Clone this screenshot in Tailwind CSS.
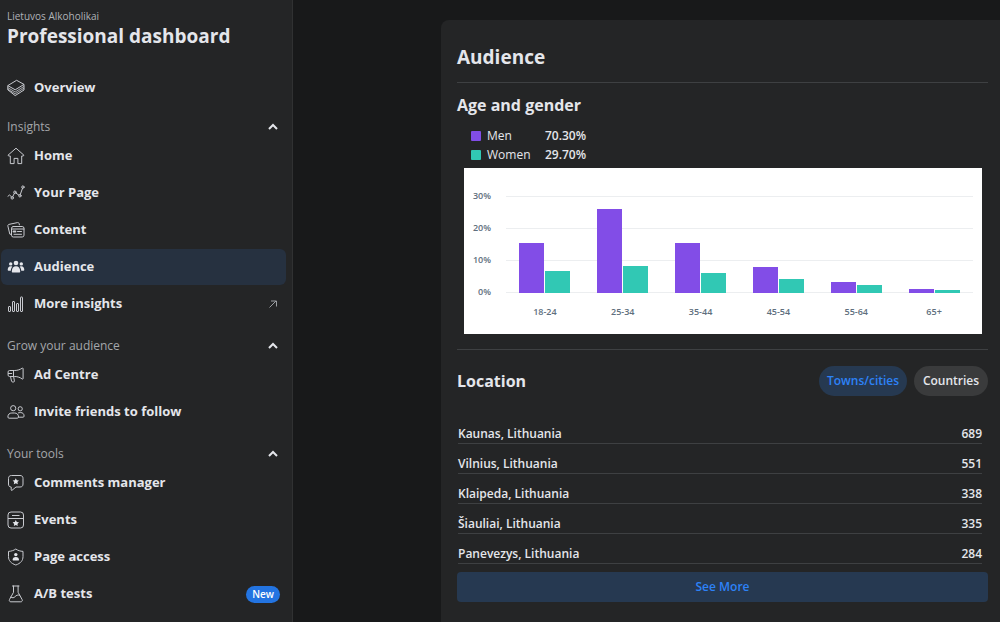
<!DOCTYPE html>
<html lang="en">
<head>
    <meta charset="UTF-8">
    <meta name="viewport" content="width=device-width, initial-scale=1.0">
    <title>Professional dashboard</title>
    <script src="https://cdn.jsdelivr.net/npm/@tailwindcss/browser@4"></script>
</head>
<body class="bg-[#18191a] text-[#e4e6eb] font-['Segoe_UI','Open_Sans',sans-serif] flex min-h-screen">

    <!-- Sidebar -->
    <aside class="w-[293px] shrink-0 bg-[#242526] border-r border-[#303132]">
        <header class="px-[7px] pt-2">
            <p class="text-[10px] leading-4 text-[#b0b3b8]">Lietuvos Alkoholikai</p>
            <h1 class="text-[19px] leading-6 font-bold">Professional dashboard</h1>
        </header>

        <nav class="mt-[22px] pl-px pr-[6px] text-[13px] font-bold">
            <a href="#" class="flex items-center gap-[9px] h-9 px-[6px] rounded-md">
                <svg class="size-[18px] text-[#c8cacf]" viewBox="0 0 18 18" fill="none" stroke="currentColor" stroke-width="1" stroke-linejoin="round">
                    <path d="M9.6 1.3 17 5.4 8.2 10.8.8 6.6z"/>
                    <path d="M.8 6.6v4.2l7.4 5.8 8.8-5.6V5.4"/>
                    <path d="M.8 8.6l7.4 4.4L17 7.4M.8 10.2l7.4 4.6L17 9.2" stroke-width=".8"/>
                </svg>
                Overview
            </a>

            <button type="button" class="mt-[10px] flex w-full items-center justify-between h-[22px] pl-[6px] pr-2 text-xs font-medium text-[#a4a7ab]">
                Insights
                <svg class="size-[10px] text-[#e4e6eb]" viewBox="0 0 10 10" fill="none" stroke="currentColor" stroke-width="2"><path d="M1 7l4-4 4 4"/></svg>
            </button>
            <ul class="flex flex-col gap-px">
                <li>
                    <a href="#" class="flex items-center gap-[9px] h-9 px-[6px] rounded-md">
                        <svg class="size-[18px] text-[#c8cacf]" viewBox="0 0 18 18" fill="none" stroke="currentColor" stroke-width="1" stroke-linejoin="round">
                            <path d="M9 1.2 16.9 8.2l-.6.8h-1.6v7.6h-3.8v-5.2H7.1v5.2H3.3V9H1.6L1 8.200z"/>
                        </svg>
                        Home
                    </a>
                </li>
                <li>
                    <a href="#" class="flex items-center gap-[9px] h-9 px-[6px] rounded-md">
                        <svg class="size-[18px] text-[#c8cacf]" viewBox="0 0 18 18" fill="none" stroke="currentColor" stroke-width="1" stroke-linecap="round">
                            <path d="M1 12.200l1.600-1.200 2 2M5.700 12.800l1.700-3.600M8.800 9l3.200 2.200M13.200 10.700l2.400-6.600"/>
                            <circle cx="5.200" cy="13.900" r="1.200"/><circle cx="7.900" cy="8.200" r="1.200"/><circle cx="12.900" cy="11.800" r="1.200"/><circle cx="15.900" cy="3.100" r="1.200"/>
                        </svg>
                        Your Page
                    </a>
                </li>
                <li>
                    <a href="#" class="flex items-center gap-[9px] h-9 px-[6px] rounded-md">
                        <svg class="size-[18px] text-[#c8cacf]" viewBox="0 0 18 18" fill="none" stroke="currentColor" stroke-width="1" stroke-linejoin="round" stroke-linecap="round">
                            <rect x="4.500" y="5.500" width="12.500" height="10.500" rx="1.800"/>
                            <path d="M4.500 13.500l-1.700-.4-1.900-8c-.2-.9.200-1.500 1-1.700l8.600-1.800c.9-.2 1.400.2 1.600 1l.3 1.200"/>
                            <path d="M4.500 8h12.500M10.500 10.500h4M7 13.300h7.500"/>
                            <path d="M6.500 10.500h2" stroke-width="1.800"/>
                        </svg>
                        Content
                    </a>
                </li>
                <li>
                    <a href="#" aria-current="page" class="flex items-center gap-[9px] h-9 px-[6px] rounded-md bg-[#263140]">
                        <svg class="size-[18px]" viewBox="0 0 18 18" fill="currentColor">
                            <circle cx="9" cy="5" r="2.300"/><circle cx="3.700" cy="5.900" r="1.700"/><circle cx="14.300" cy="5.900" r="1.700"/>
                            <path d="M4.800 13.500c0-3.400 1.700-5.300 4.200-5.300s4.200 1.900 4.200 5.300c0 .6-.4 1-1 1H5.800c-.6 0-1-.4-1-1z"/>
                            <path d="M5.300 8.700c-.5-.4-1-.5-1.700-.5C1.800 8.200.7 9.700.7 11.800c0 .6.300.9.800.9h2.300c.1-1.700.6-3 1.500-4zM12.700 8.700c.5-.4 1-.5 1.700-.5 1.800 0 2.900 1.500 2.900 3.600 0 .6-.3.9-.8.9h-2.300c-.1-1.700-.6-3-1.500-4z"/>
                        </svg>
                        Audience
                    </a>
                </li>
                <li>
                    <a href="#" class="flex items-center gap-[9px] h-9 pl-[6px] pr-2 rounded-md">
                        <svg class="size-[18px] text-[#c8cacf]" viewBox="0 0 18 18" fill="none" stroke="currentColor" stroke-width="1">
                            <rect x="1.500" y="11.500" width="2" height="5" rx=".5"/><rect x="5.500" y="6.500" width="2" height="10" rx=".5"/><rect x="9.500" y="8.500" width="2" height="8" rx=".5"/><rect x="13.500" y="2" width="2" height="14.500" rx=".5"/>
                        </svg>
                        More insights
                        <svg class="size-[10px] ml-auto text-[#9a9da1]" viewBox="0 0 10 10" fill="none" stroke="currentColor" stroke-width="1"><path d="M1.500 8.500l6.500-6.500M3 2h5.500v5.500"/></svg>
                    </a>
                </li>
            </ul>

            <button type="button" class="mt-[13px] flex w-full items-center justify-between h-[22px] pl-[6px] pr-2 text-xs font-medium text-[#a4a7ab]">
                Grow your audience
                <svg class="size-[10px] text-[#e4e6eb]" viewBox="0 0 10 10" fill="none" stroke="currentColor" stroke-width="2"><path d="M1 7l4-4 4 4"/></svg>
            </button>
            <ul class="flex flex-col gap-px">
                <li>
                    <a href="#" class="flex items-center gap-[9px] h-9 px-[6px] rounded-md">
                        <svg class="size-[18px] text-[#c8cacf]" viewBox="0 0 18 18" fill="none" stroke="currentColor" stroke-width="1" stroke-linejoin="round">
                            <path d="M2.500 4.500h5.200c3 0 5.500-1 7.500-2.300.5-.3.900-.1.900.4v10c0 .5-.4.700-.9.400-2-1.500-4.500-2.500-7.500-2.500H2.500c-.9 0-1.400-.6-1.400-1.400V5.900c0-.8.500-1.400 1.400-1.400z"/>
                            <path d="M1.100 7.500h4M6.500 4.500v6M3.500 10.500l1 4.500c.2.700.6 1 1.200 1h.8c.7 0 1-.5.9-1.100l-.8-4.400"/>
                        </svg>
                        Ad Centre
                    </a>
                </li>
                <li>
                    <a href="#" class="flex items-center gap-[9px] h-9 px-[6px] rounded-md">
                        <svg class="size-[18px] text-[#c8cacf]" viewBox="0 0 18 18" fill="none" stroke="currentColor" stroke-width="1" stroke-linejoin="round">
                            <circle cx="6.200" cy="5.200" r="2.600"/><circle cx="13.200" cy="5.800" r="2.100"/>
                            <path d="M.9 14c0-2.700 1.700-4 3.900-4h2.800c2.200 0 3.900 1.300 3.900 4 0 .8-.5 1.200-1.200 1.200H2.100c-.7 0-1.200-.4-1.200-1.200z"/>
                            <path d="M11 10c.6-.3 1.200-.4 1.900-.4h.8c2 0 3.400 1.200 3.400 3.500 0 .7-.4 1.100-1.100 1.100h-4.500"/>
                        </svg>
                        Invite friends to follow
                    </a>
                </li>
            </ul>

            <button type="button" class="mt-[13px] flex w-full items-center justify-between h-[22px] pl-[6px] pr-2 text-xs font-medium text-[#a4a7ab]">
                Your tools
                <svg class="size-[10px] text-[#e4e6eb]" viewBox="0 0 10 10" fill="none" stroke="currentColor" stroke-width="2"><path d="M1 7l4-4 4 4"/></svg>
            </button>
            <ul class="flex flex-col gap-px">
                <li>
                    <a href="#" class="flex items-center gap-[9px] h-9 px-[6px] rounded-md">
                        <svg class="size-[18px] text-[#c8cacf]" viewBox="0 0 18 18" fill="none" stroke="currentColor" stroke-width="1" stroke-linejoin="round">
                            <path d="M4.500 1.500h8.500c2 0 3 1 3 3v5.500c0 2-1 3-3 3H9l-4 3.300c-.4.300-.8.100-.8-.4V13c-1.800 0-2.700-1-2.700-3V4.500c0-2 1-3 3-3z"/>
                            <path fill="#e4e6eb" stroke="none" d="M8.800 4.200l1 2 2.200.3-1.600 1.600.4 2.200-2-1-2 1 .4-2.200-1.600-1.600 2.200-.3z"/>
                        </svg>
                        Comments manager
                    </a>
                </li>
                <li>
                    <a href="#" class="flex items-center gap-[9px] h-9 px-[6px] rounded-md">
                        <svg class="size-[18px] text-[#c8cacf]" viewBox="0 0 18 18" fill="none" stroke="currentColor" stroke-width="1">
                            <rect x="1" y="1" width="15.500" height="16" rx="3"/>
                            <path d="M1 7.500h15.500M5 4.500h7.500"/>
                            <path fill="#e4e6eb" stroke="none" d="M8.800 9l1 2 2.200.3-1.600 1.600.4 2.200-2-1-2 1 .4-2.200-1.600-1.600 2.200-.3z"/>
                        </svg>
                        Events
                    </a>
                </li>
                <li>
                    <a href="#" class="flex items-center gap-[9px] h-9 px-[6px] rounded-md">
                        <svg class="size-[18px] text-[#c8cacf]" viewBox="0 0 18 18" fill="none" stroke="currentColor" stroke-width="1" stroke-linejoin="round">
                            <path d="M8.800 1c2.200 1.600 4.500 2.200 7.200 2.400v5.200c0 4-2.400 6.800-7.200 8.400-4.800-1.600-7.300-4.400-7.300-8.400V3.400C4.200 3.200 6.600 2.600 8.800 1z"/>
                            <circle cx="8.800" cy="6.600" r="1.700" fill="#e4e6eb" stroke="none"/>
                            <path d="M5.600 12c0-1.900 1.100-3 3.200-3s3.200 1.100 3.200 3c0 .3-.2.500-.5.500H6.100c-.3 0-.5-.2-.5-.5z" fill="#e4e6eb" stroke="none"/>
                        </svg>
                        Page access
                    </a>
                </li>
                <li>
                    <a href="#" class="flex items-center gap-[9px] h-9 px-[6px] rounded-md">
                        <svg class="size-[18px] text-[#c8cacf]" viewBox="0 0 18 18" fill="none" stroke="currentColor" stroke-width="1" stroke-linejoin="round" stroke-linecap="round">
                            <path d="M5.500 1h6.500M6.500 1v6.300l-4 7.200c-.6 1.200 0 2.300 1.300 2.300h10c1.300 0 1.900-1.100 1.300-2.300l-4-7.200V1"/>
                            <path d="M3.800 12.200c1.800.9 3 .8 4.300-.6s2.600-1.900 4.600-1.400"/>
                        </svg>
                        A/B tests
                        <span class="ml-auto flex h-[17px] items-center rounded-full bg-[#2374e1] px-[6px] text-[10px] font-semibold text-white">New</span>
                    </a>
                </li>
            </ul>
        </nav>
    </aside>

    <!-- Audience card -->
    <main class="flex flex-1 min-w-0 pt-5 pl-[148px]">
        <section class="flex-1 min-w-0 rounded-tl-lg bg-[#242526] pl-4 pr-3">
            <h2 class="mt-[23px] text-[19px] leading-7 font-bold">Audience</h2>
            <hr class="mt-[11px] border-[#3e4042]">

            <h3 class="mt-[10px] text-base leading-6 font-bold">Age and gender</h3>
            <table class="mt-[9px] ml-[14px] text-xs leading-[19px]">
                <tr>
                    <td class="w-4"><span class="block size-[10px] rounded-[1px] bg-[#824de7]"></span></td>
                    <th scope="row" class="w-[58px] text-left font-normal">Men</th>
                    <td class="font-semibold">70.30%</td>
                </tr>
                <tr>
                    <td><span class="block size-[10px] rounded-[1px] bg-[#31c8b4]"></span></td>
                    <th scope="row" class="text-left font-normal">Women</th>
                    <td class="font-semibold">29.70%</td>
                </tr>
            </table>

            <!-- Bar chart: 32px per 10% -->
            <div class="mt-1 ml-[7px] mr-[6px] h-[166px] bg-white pt-5 pl-2 pr-[9px] text-[9px] leading-4 font-semibold text-[#606f7e]">
                <div class="flex">
                    <div class="flex w-[34px] flex-col gap-4">
                        <span class="w-[19px] text-right">30%</span>
                        <span class="w-[19px] text-right">20%</span>
                        <span class="w-[19px] text-right">10%</span>
                        <span class="w-[19px] text-right">0%</span>
                    </div>
                    <div class="grid flex-1 pt-2">
                        <div class="col-start-1 row-start-1 h-[97px]">
                            <div class="h-8 border-t border-[#eceef0]"></div>
                            <div class="h-8 border-t border-[#eceef0]"></div>
                            <div class="h-8 border-t border-[#eceef0]"></div>
                            <div class="border-t border-[#eceef0]"></div>
                        </div>
                        <div id="bars" class="col-start-1 row-start-1 grid h-[97px] grid-cols-6"></div>
                    </div>
                </div>
                <div id="ages" class="mt-1 ml-[34px] grid grid-cols-6 text-center"></div>
            </div>

            <hr class="mt-[15px] border-[#3e4042]">

            <div class="mt-4 flex items-center gap-[7px]">
                <h3 class="mr-auto text-base leading-6 font-bold">Location</h3>
                <button type="button" class="h-[30px] w-[88px] rounded-full bg-[#263951] text-xs font-semibold text-[#2d82f7]">Towns/cities</button>
                <button type="button" class="h-[30px] w-[74px] rounded-full bg-[#3a3b3c] text-xs font-semibold">Countries</button>
            </div>

            <div class="mt-[17px] pl-px pr-[6px]">
                <table class="w-full text-xs font-semibold">
                    <tbody id="locations"></tbody>
                </table>
            </div>
            <button type="button" class="mt-2 h-[30px] w-full rounded-sm bg-[#263951] text-xs font-semibold text-[#2d82f7]">See More</button>
        </section>
    </main>

    <script>
        const groups = [
            { age: '18-24', men: 15.6, women: 6.8 },
            { age: '25-34', men: 26.4, women: 8.5 },
            { age: '35-44', men: 15.6, women: 6.4 },
            { age: '45-54', men: 8.1, women: 4.5 },
            { age: '55-64', men: 3.4, women: 2.4 },
            { age: '65+', men: 1.2, women: 0.8 },
        ];
        const locations = [
            ['Kaunas, Lithuania', 689],
            ['Vilnius, Lithuania', 551],
            ['Klaipeda, Lithuania', 338],
            ['Šiauliai, Lithuania', 335],
            ['Panevezys, Lithuania', 284],
        ];

        document.getElementById('bars').innerHTML = groups.map(g => `
            <div class="flex items-end justify-center gap-px">
                <div class="w-[25px] bg-[#824de7]" style="height:${g.men * 3.2}px"></div>
                <div class="w-[25px] bg-[#31c8b4]" style="height:${g.women * 3.2}px"></div>
            </div>`).join('');
        document.getElementById('ages').innerHTML = groups.map(g => `<span>${g.age}</span>`).join('');
        document.getElementById('locations').innerHTML = locations.map(([city, count]) => `
            <tr class="h-[30px] border-b border-[#3e4042]">
                <td class="pt-3">${city}</td>
                <td class="pt-3 text-right">${count}</td>
            </tr>`).join('');
    </script>
</body>
</html>
